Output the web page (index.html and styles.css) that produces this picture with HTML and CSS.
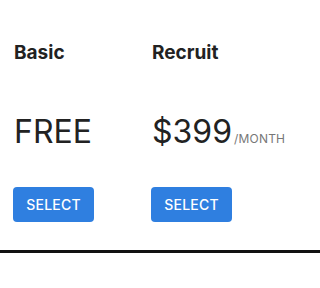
FILE: index.html
```html
<!DOCTYPE html>
<html>
<head>
<meta charset="utf-8">
<link rel="stylesheet" href="styles.css">
</head>
<body>
<div class="plans">
  <div class="plan">
    <h2 class="plan-name">Basic</h2>
    <div class="price">FREE</div>
    <button class="select">SELECT</button>
  </div>
  <div class="plan">
    <h2 class="plan-name">Recruit</h2>
    <div class="price">$399<span class="per">/MONTH</span></div>
    <button class="select">SELECT</button>
  </div>
</div>
<hr class="divider">
</body>
</html>
```
FILE: styles.css
```css
html, body {
  margin: 0;
  padding: 0;
  background: #fff;
}
body {
  font-family: Inter, "Noto Sans", sans-serif;
  color: #222;
}
.plans {
  display: grid;
  grid-template-columns: 138px 138px;
  padding: 41px 0 0 13px;
}
.plan {
  display: flex;
  flex-direction: column;
  align-items: flex-start;
}
.plan-name {
  margin: 0 0 0 1px;
  font-size: 19px;
  line-height: 23px;
  font-weight: 700;
  color: #222;
}
.price {
  margin: 48px 0 0 1px;
  height: 39px;
  font-size: 32px;
  line-height: 39px;
  font-weight: 400;
  color: #222;
  white-space: nowrap;
}
.per {
  font-size: 12px;
  line-height: 1;
  color: #777;
  margin-left: 2px;
  letter-spacing: 0.2px;
}
.select {
  margin-top: 36px;
  width: 81px;
  height: 35px;
  border: none;
  border-radius: 4px;
  background: #2f7fe0;
  color: #fff;
  font-family: Inter, "Noto Sans", sans-serif;
  font-size: 14px;
  font-weight: 500;
  padding: 0;
  letter-spacing: 0.2px;
}
.divider {
  margin: 28px 0 0 0;
  border: none;
  height: 3px;
  background: #111;
}
```
